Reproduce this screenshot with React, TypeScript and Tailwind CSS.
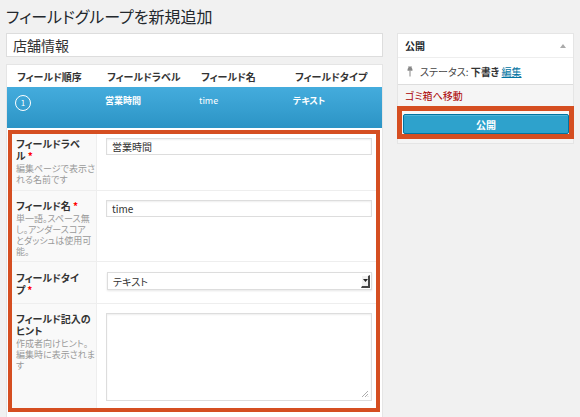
import React from 'react';

const fields = [
  { order: '1', label: '営業時間', name: 'time', type: 'テキスト' },
];

function Grip() {
  return (
    <svg width="8" height="8" viewBox="0 0 8 8" className="absolute right-[2px] bottom-[2px]">
      <path d="M7 1 L1 7 M7 4 L4 7 M7 6.5 L6.5 7" stroke="#999" strokeWidth="0.8" />
    </svg>
  );
}

function Pin() {
  return (
    <svg width="6" height="11" viewBox="0 0 6 11" className="shrink-0">
      <path d="M1 0.5 H5 L4.5 1.5 Q5.8 3 5.5 4.8 H0.5 Q0.2 3 1.5 1.5 Z" fill="#888" />
      <path d="M3 4.8 V10.5" stroke="#888" strokeWidth="1" />
    </svg>
  );
}

function Req() {
  return <span className="inline-block pl-[2px] text-[#f00]">*</span>;
}

export default function App() {
  return (
    <div className="w-[580px] h-[417px] overflow-hidden bg-[#f1f1f1] px-[6px] text-[#444] font-['Noto_Sans_CJK_JP',sans-serif] [font-feature-settings:'palt']">
      <h1 className="pt-[4px] mb-[5px] text-[16px] leading-[24px] text-[#23282d] font-normal">
        フィールドグループを新規追加
      </h1>

      <div className="flex gap-[14px]">
        {/* Main column */}
        <div className="w-[377px] shrink-0">
          <div className="h-[24px] bg-white border border-[#ddd] px-[6px] text-[14px] leading-[22px] text-[#333]">
            店舗情報
          </div>

          <div className="mt-[7px] bg-white border border-[#e5e5e5] border-b-0">
            {/* Header */}
            <div className="flex h-[22px] items-center pl-[10px] text-[10px] font-bold text-[#333]">
              <div className="w-[90px]">フィールド順序</div>
              <div className="w-[94px]">フィールドラベル</div>
              <div className="w-[94px]">フィールド名</div>
              <div>フィールドタイプ</div>
            </div>

            {/* Field row */}
            {fields.map((f) => (
              <div
                key={f.order}
                className="flex h-[41px] pl-[8px] pt-[8px] bg-gradient-to-b from-[#44acdd] to-[#2b94c5] text-white text-[9px] leading-[12px]"
              >
                <div className="w-[90px]">
                  <div className="w-[16px] h-[16px] rounded-full border border-white flex items-center justify-center text-[8px]">
                    {f.order}
                  </div>
                </div>
                <div className="w-[94px] font-bold">{f.label}</div>
                <div className="w-[94px]">{f.name}</div>
                <div className="font-bold">{f.type}</div>
              </div>
            ))}

            {/* Settings */}
            <div className="pl-[1px] pr-[2px] pt-[2px]">
              <div className="border-4 border-[#d54e21]">
                {/* Label row */}
                <div className="flex h-[57px] border-b border-[#eee]">
                  <div className="w-[85px] shrink-0 bg-[#f9f9f9] border-r border-[#eee] px-[4px] pt-[4px] whitespace-nowrap">
                    <div className="text-[10px] font-bold leading-[12px] text-[#333]">
                      フィールドラベ<br />ル<Req />
                    </div>
                    <div className="mt-[1px] text-[9px] leading-[11px] text-[#999]">
                      編集ページで表示さ<br />れる名前です
                    </div>
                  </div>
                  <div className="flex-1 pl-[9px] pr-[4px] pt-[4px]">
                    <div className="h-[17px] border border-[#ddd] shadow-[inset_0_1px_2px_rgba(0,0,0,0.07)] px-[5px] text-[10px] leading-[15px] text-[#333]">
                      営業時間
                    </div>
                  </div>
                </div>

                {/* Name row */}
                <div className="flex h-[71px] border-b border-[#eee]">
                  <div className="w-[85px] shrink-0 bg-[#f9f9f9] border-r border-[#eee] px-[4px] pt-[9px] whitespace-nowrap">
                    <div className="text-[10px] font-bold leading-[12px] text-[#333]">
                      フィールド名<Req />
                    </div>
                    <div className="mt-[1px] text-[9px] leading-[11px] text-[#999]">
                      単一語。スペース無<br />し。アンダースコア<br />とダッシュは使用可<br />能。
                    </div>
                  </div>
                  <div className="flex-1 pl-[9px] pr-[4px] pt-[9px]">
                    <div className="h-[17px] border border-[#ddd] shadow-[inset_0_1px_2px_rgba(0,0,0,0.07)] px-[5px] text-[10px] leading-[15px] text-[#333]">
                      time
                    </div>
                  </div>
                </div>

                {/* Type row */}
                <div className="flex h-[42px] border-b border-[#eee]">
                  <div className="w-[85px] shrink-0 bg-[#f9f9f9] border-r border-[#eee] px-[4px] pt-[10px] whitespace-nowrap">
                    <div className="text-[10px] font-bold leading-[12px] text-[#333]">
                      フィールドタイ<br />プ<Req />
                    </div>
                  </div>
                  <div className="flex-1 pl-[10px] pr-[4px] pt-[10px]">
                    <div className="h-[18px] flex items-center border border-[#ddd] shadow-[0_1px_2px_rgba(0,0,0,0.1)] pl-[5px] pr-[1px] text-[10px] text-[#333]">
                      <span className="flex-1">テキスト</span>
                      <div className="w-[9px] h-[13px] bg-[#f0f0f0] border-t border-l border-white border-r-2 border-b-2 border-r-[#444] border-b-[#444] flex items-center justify-center">
                        <svg width="5" height="3" viewBox="0 0 5 3">
                          <path d="M0 0 H5 L2.5 3 Z" fill="#222" />
                        </svg>
                      </div>
                    </div>
                  </div>
                </div>

                {/* Instructions row */}
                <div className="flex h-[104px]">
                  <div className="w-[85px] shrink-0 bg-[#f9f9f9] border-r border-[#eee] px-[4px] pt-[9px] whitespace-nowrap">
                    <div className="text-[10px] font-bold leading-[12px] text-[#333]">
                      フィールド記入の<br />ヒント
                    </div>
                    <div className="mt-[1px] text-[9px] leading-[11px] text-[#999]">
                      作成者向けヒント。<br />編集時に表示されま<br />す
                    </div>
                  </div>
                  <div className="flex-1 pl-[9px] pr-[4px] pt-[9px]">
                    <div className="relative h-[88px] border border-[#ddd] shadow-[inset_0_1px_2px_rgba(0,0,0,0.07)]">
                      <Grip />
                    </div>
                  </div>
                </div>
              </div>
            </div>
            <div className="h-[10px]" />
          </div>
        </div>

        {/* Sidebar */}
        <div className="w-[177px] shrink-0">
          <div className="bg-white border border-[#e5e5e5]">
            <div className="h-[24px] flex items-center justify-between px-[7px] border-b border-[#eee]">
              <span className="text-[10px] font-bold text-[#23282d]">公開</span>
              <svg width="6" height="4" viewBox="0 0 6 4">
                <path d="M0 4 L3 0 L6 4 Z" fill="#aaa" />
              </svg>
            </div>
            <div className="h-[26px] flex items-center gap-[7px] pl-[9px] text-[10px] text-[#444]">
              <Pin />
              <span>
                ステータス: <b className="text-[#333]">下書き</b>{' '}
                <span className="text-[#0074a2] underline">編集</span>
              </span>
            </div>
            <div className="bg-[#f5f5f5] border-t border-[#ddd]">
              <div className="h-[21px] flex items-center pl-[7px] text-[10px] text-[#a00]">
                ゴミ箱へ移動
              </div>
              <div className="-mx-[1px] border-[5px] border-[#d54e21] bg-[#f8f8f8] pt-[3px] pl-[1px]">
                <div className="h-[20px] flex items-center justify-center rounded-[2px] bg-[#2ea2cc] border border-[#0074a2] shadow-[inset_0_1px_0_rgba(120,200,230,0.5)] text-[10px] font-bold text-white">
                  公開
                </div>
              </div>
              <div className="h-[4px]" />
            </div>
          </div>
        </div>
      </div>
    </div>
  );
}
